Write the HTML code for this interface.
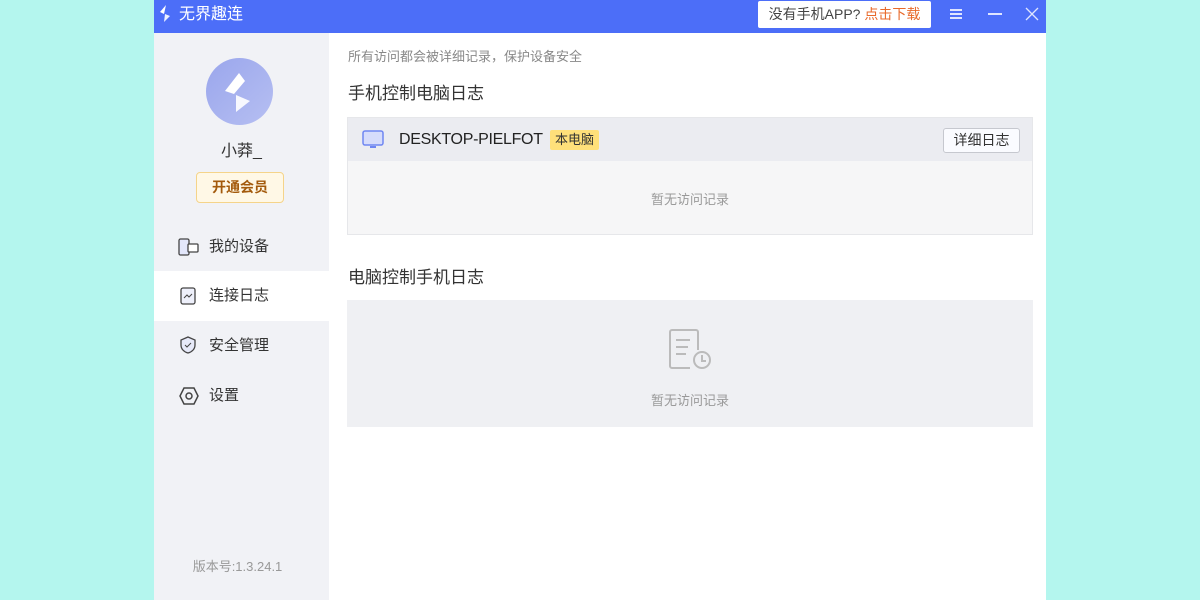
<!DOCTYPE html>
<html><head><meta charset="utf-8"><style>
*{margin:0;padding:0;box-sizing:border-box}
body{width:1200px;height:600px;background:#b4f6ee;position:relative;overflow:hidden;font-family:"Liberation Sans","Noto Sans CJK SC",sans-serif}
.win{position:absolute;left:154px;top:0;width:892px;height:600px;background:#fff}
.top{position:absolute;left:0;top:0;width:892px;height:33px;background:#4c6ef8;color:#fff}
.side{position:absolute;left:0;top:33px;width:175px;height:567px;background:#f1f2f6}
.abs{position:absolute}
.nav{position:absolute;left:0;width:175px;height:50px;font-size:15px;color:#333;line-height:50px;padding-left:55px}
</style></head><body>
<div class="win">
<div class="top">
<svg class="abs" style="left:4px;top:5px" width="16" height="18" viewBox="0 0 16 18"><path d="M8 0L2 7l4 2z" fill="#fff"/><path d="M7 9l5 2-6 6z" fill="#fff" opacity=".9"/></svg>
<div class="abs" style="left:25px;top:7px;font-size:16px;line-height:16px">无界趣连</div>
<div class="abs" style="left:604px;top:1px;width:173px;height:27px;background:#fff;border-radius:2px;font-size:14px;line-height:27px;text-align:center;color:#444">没有手机APP? <span style="color:#e8692a">点击下载</span></div>
<div class="abs" style="left:796px;top:9px;width:12px;height:1.5px;background:#dfe5ff;box-shadow:0 4px 0 #dfe5ff,0 8px 0 #dfe5ff"></div>
<div class="abs" style="left:834px;top:13px;width:14px;height:1.5px;background:#dfe5ff"></div>
<svg class="abs" style="left:871px;top:7px" width="14" height="14"><path d="M1 1L13 13M13 1L1 13" stroke="#dfe5ff" stroke-width="1.3"/></svg>
</div>
<div class="side">
<div class="abs" style="left:52px;top:25px;width:67px;height:67px;border-radius:50%;background:linear-gradient(135deg,#9aa6ec,#b6bff2)"></div>
<svg class="abs" style="left:68px;top:36px" width="34" height="44" viewBox="0 0 34 44"><path d="M17 4L3 22l9 3 11-13z" fill="#fff"/><path d="M14 26l14 6-14 11z" fill="#fff" opacity=".9"/></svg>
<div class="abs" style="left:0;width:175px;top:104px;text-align:center;font-size:16px;color:#333">小莽_</div>
<div class="abs" style="left:42px;top:139px;width:88px;height:31px;border:1px solid #f5d48a;border-radius:4px;background:#fff8e6;color:#a35a0c;font-size:14px;font-weight:bold;text-align:center;line-height:29px">开通会员</div>
<div class="nav" style="top:189px">我的设备</div>
<div class="nav" style="top:238px;background:#fff">连接日志</div>
<div class="nav" style="top:288px">安全管理</div>
<div class="nav" style="top:338px">设置</div>
<svg class="abs" style="left:24px;top:205px" width="22" height="18"><rect x="1" y="1" width="10" height="16" rx="1.5" fill="#e3e7fb" stroke="#444" stroke-width="1.3"/><rect x="10" y="6" width="10" height="8" rx="1" fill="#fff" stroke="#444" stroke-width="1.3"/></svg>
<svg class="abs" style="left:26px;top:254px" width="16" height="18"><rect x="1" y="1" width="14" height="16" rx="2" fill="#eef0fb" stroke="#444" stroke-width="1.3"/><path d="M4 11l3-3 2 2 3-3" stroke="#444" fill="none"/></svg>
<svg class="abs" style="left:26px;top:303px" width="16" height="18"><path d="M8 1l7 3v5c0 4-3 7-7 8-4-1-7-4-7-8V4z" fill="#e6e9f8" stroke="#444" stroke-width="1.3"/><path d="M5 9l2 2 4-4" stroke="#444" fill="none"/></svg>
<svg class="abs" style="left:25px;top:354px" width="20" height="18"><path d="M5 1h10l4 8-4 8H5L1 9z" fill="none" stroke="#444" stroke-width="1.5"/><circle cx="10" cy="9" r="3" fill="none" stroke="#444" stroke-width="1.5"/></svg>
<div class="abs" style="left:-4px;width:175px;top:523px;text-align:center;font-size:13px;color:#999">版本号:1.3.24.1</div>
</div>
<div class="abs" style="left:194px;top:46px;font-size:13px;color:#888">所有访问都会被详细记录，保护设备安全</div>
<div class="abs" style="left:194px;top:79px;font-size:17px;color:#333">手机控制电脑日志</div>
<div class="abs" style="left:193px;top:117px;width:686px;height:118px;border:1px solid #e6e7ea;background:#f6f6f7"></div>
<div class="abs" style="left:194px;top:118px;width:684px;height:43px;background:#ebecf1"></div>
<svg class="abs" style="left:208px;top:130px" width="22" height="20"><rect x="1" y="1" width="20" height="14" rx="2" fill="#d6dcfb" stroke="#6f86f2" stroke-width="1.5"/><rect x="8" y="16" width="6" height="2" fill="#6f86f2"/></svg>
<div class="abs" style="left:245px;top:131px;font-size:16px;letter-spacing:-0.3px;color:#222">DESKTOP-PIELFOT</div>
<div class="abs" style="left:396px;top:130px;width:49px;height:20px;background:#ffe07a;border-radius:2px;font-size:13px;line-height:20px;text-align:center;color:#333">本电脑</div>
<div class="abs" style="left:789px;top:128px;width:77px;height:25px;border:1px solid #c6c8cf;border-radius:3px;background:#fafbff;font-size:14px;line-height:23px;text-align:center;color:#333">详细日志</div>
<div class="abs" style="left:194px;top:189px;width:684px;text-align:center;font-size:13px;color:#999">暂无访问记录</div>
<div class="abs" style="left:194px;top:263px;font-size:17px;color:#333">电脑控制手机日志</div>
<div class="abs" style="left:193px;top:300px;width:686px;height:127px;background:#eff0f3"></div>
<svg class="abs" style="left:514px;top:328px" width="46" height="44"><path d="M30 22V4a2 2 0 0 0-2-2H4a2 2 0 0 0-2 2v34a2 2 0 0 0 2 2h18" fill="none" stroke="#bbb" stroke-width="2"/><path d="M8 12h14M8 19h12M8 26h10" stroke="#bbb" stroke-width="2"/><circle cx="34" cy="32" r="8" fill="#eff0f3" stroke="#bbb" stroke-width="2"/><path d="M34 27v6h4" stroke="#bbb" stroke-width="2" fill="none"/></svg>
<div class="abs" style="left:194px;top:390px;width:684px;text-align:center;font-size:13px;color:#999">暂无访问记录</div>
</div>
</body></html>
